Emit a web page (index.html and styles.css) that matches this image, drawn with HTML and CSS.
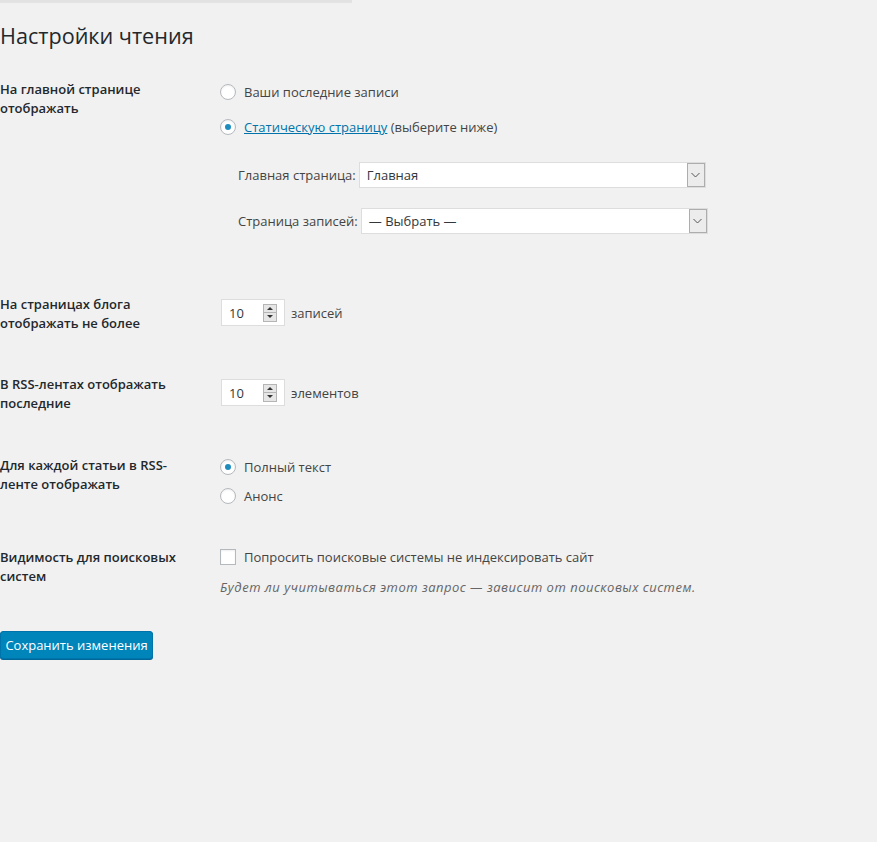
FILE: index.html
```html
<!DOCTYPE html>
<html lang="ru">
<head>
<meta charset="utf-8">
<title>Настройки чтения</title>
<link rel="stylesheet" href="styles.css">
</head>
<body>
<div class="topline"></div>
<h1 class="title">Настройки чтения</h1>

<div class="row row1">
  <div class="label">На главной странице<br>отображать</div>
  <div class="content">
    <div class="option"><span class="radio"></span><span>Ваши последние записи</span></div>
    <div class="option option-2"><span class="radio checked"></span><span><a class="link" href="#">Статическую страницу</a> (выберите ниже)</span></div>
    <div class="pick pick-1"><span class="pick-label">Главная страница:</span><div class="select"><span class="select-text">Главная</span><span class="select-arrow"><svg width="9" height="6" viewBox="0 0 9 6"><path d="M0.5 1 L4.5 5 L8.5 1" fill="none" stroke="#555" stroke-width="1"/></svg></span></div></div>
    <div class="pick pick-2"><span class="pick-label">Страница записей:</span><div class="select"><span class="select-text">— Выбрать —</span><span class="select-arrow"><svg width="9" height="6" viewBox="0 0 9 6"><path d="M0.5 1 L4.5 5 L8.5 1" fill="none" stroke="#555" stroke-width="1"/></svg></span></div></div>
  </div>
</div>

<div class="row row2">
  <div class="label">На страницах блога<br>отображать не более</div>
  <div class="content num-content">
    <div class="number"><span class="number-text">10</span><span class="spin"><span class="spin-up"></span><span class="spin-down"></span></span></div>
    <span class="unit">записей</span>
  </div>
</div>

<div class="row row3">
  <div class="label">В RSS-лентах отображать<br>последние</div>
  <div class="content num-content">
    <div class="number"><span class="number-text">10</span><span class="spin"><span class="spin-up"></span><span class="spin-down"></span></span></div>
    <span class="unit">элементов</span>
  </div>
</div>

<div class="row row4">
  <div class="label">Для каждой статьи в RSS-<br>ленте отображать</div>
  <div class="content">
    <div class="option"><span class="radio checked"></span><span>Полный текст</span></div>
    <div class="option option-b"><span class="radio"></span><span>Анонс</span></div>
  </div>
</div>

<div class="row row5">
  <div class="label label5">Видимость для поисковых<br>систем</div>
  <div class="content">
    <div class="option"><span class="checkbox"></span><span>Попросить поисковые системы не индексировать сайт</span></div>
    <p class="desc">Будет ли учитываться этот запрос — зависит от поисковых систем.</p>
  </div>
</div>

<div class="submit"><button class="button" type="button">Сохранить изменения</button></div>
</body>
</html>
```

FILE: styles.css
```css
html, body {
  margin: 0;
  padding: 0;
  background: #f1f1f1;
}
body {
  font-family: "Open Sans", "Noto Sans", sans-serif;
  font-size: 13px;
  color: #444;
  width: 877px;
  height: 842px;
  overflow: hidden;
}
.topline {
  width: 352px;
  height: 2px;
  background: #e2e2e2;
  box-shadow: 0 1px 1px rgba(0,0,0,0.06);
}
.title {
  margin: 19px 0 0 0;
  font-size: 21.6px;
  font-weight: 400;
  line-height: 29px;
  color: #23282d;
}
.row {
  display: grid;
  grid-template-columns: 220px 1fr;
  align-items: start;
}
.label {
  font-weight: 600;
  color: #23282d;
  line-height: 19px;
}
.row1 { margin-top: 30px; }
.row2 { margin-top: 61px; }
.row3 { margin-top: 42px; }
.row4 { margin-top: 43px; }
.row5 { margin-top: 39px; }
.label5 { padding-top: 2px; }

.option {
  display: flex;
  align-items: center;
  gap: 8px;
  height: 22px;
  line-height: 22px;
}
.row1 .option:first-child { margin-top: 1px; }
.option-2 { margin-top: 13px; }
.option-b { margin-top: 7px; }

.radio {
  box-sizing: border-box;
  width: 16px;
  height: 16px;
  border: 1px solid #b4b9be;
  border-radius: 50%;
  background: #fff;
  box-shadow: inset 0 1px 2px rgba(0,0,0,0.07);
  display: flex;
  align-items: center;
  justify-content: center;
  flex: none;
}
.radio.checked::after {
  content: "";
  width: 6px;
  height: 6px;
  border-radius: 50%;
  background: #1e8cbe;
}
.checkbox {
  box-sizing: border-box;
  width: 16px;
  height: 16px;
  border: 1px solid #b4b9be;
  background: #fff;
  box-shadow: inset 0 1px 2px rgba(0,0,0,0.07);
  flex: none;
}
.link {
  color: #0073aa;
  text-decoration: underline;
}

.pick {
  display: flex;
  align-items: center;
  gap: 3px;
  padding-left: 18px;
  height: 26px;
}
.pick-1 { margin-top: 24px; }
.pick-2 { margin-top: 20px; }
.pick-label { color: #444; }
.select {
  box-sizing: border-box;
  width: 347px;
  height: 26px;
  background: #fff;
  border: 1px solid #ddd;
  display: flex;
  align-items: center;
  justify-content: space-between;
}
.select-text {
  padding-left: 7px;
  color: #32373c;
}
.select-arrow {
  box-sizing: border-box;
  width: 18px;
  height: 24px;
  background: #ececec;
  border: 1px solid #adadad;
  display: flex;
  align-items: center;
  justify-content: center;
}

.num-content {
  padding-top: 4px;
  display: flex;
  align-items: center;
  gap: 6px;
}
.row2 .num-content, .row3 .num-content { margin-left: 1px; }
.number {
  box-sizing: border-box;
  width: 64px;
  height: 27px;
  background: #fff;
  border: 1px solid #ddd;
  display: flex;
  align-items: center;
  padding-left: 7px;
}
.number-text {
  width: 34px;
  color: #32373c;
}
.spin {
  box-sizing: border-box;
  width: 14px;
  height: 18px;
  border: 1px solid #b5b5b5;
  background: #e6e6e6;
  display: flex;
  flex-direction: column;
}
.spin-up, .spin-down {
  flex: 1;
  display: flex;
  align-items: center;
  justify-content: center;
}
.spin-up { border-bottom: 1px solid #b5b5b5; }
.spin-up::after {
  content: "";
  border-left: 3px solid transparent;
  border-right: 3px solid transparent;
  border-bottom: 3px solid #333;
}
.spin-down::after {
  content: "";
  border-left: 3px solid transparent;
  border-right: 3px solid transparent;
  border-top: 3px solid #333;
}
.unit { color: #444; }

.desc {
  margin: 9px 0 0 0;
  font-style: italic;
  color: #666;
  line-height: 20px;
  letter-spacing: 0.5px;
}

.submit { margin-top: 34px; }
.button {
  box-sizing: border-box;
  width: 153px;
  height: 28px;
  background: #0085ba;
  border: 1px solid #0073aa;
  border-radius: 3px;
  box-shadow: 0 1px 0 #006799;
  color: #fff;
  font-family: "Open Sans", "Noto Sans", sans-serif;
  font-size: 13px;
  padding: 0;
  cursor: pointer;
}
```
